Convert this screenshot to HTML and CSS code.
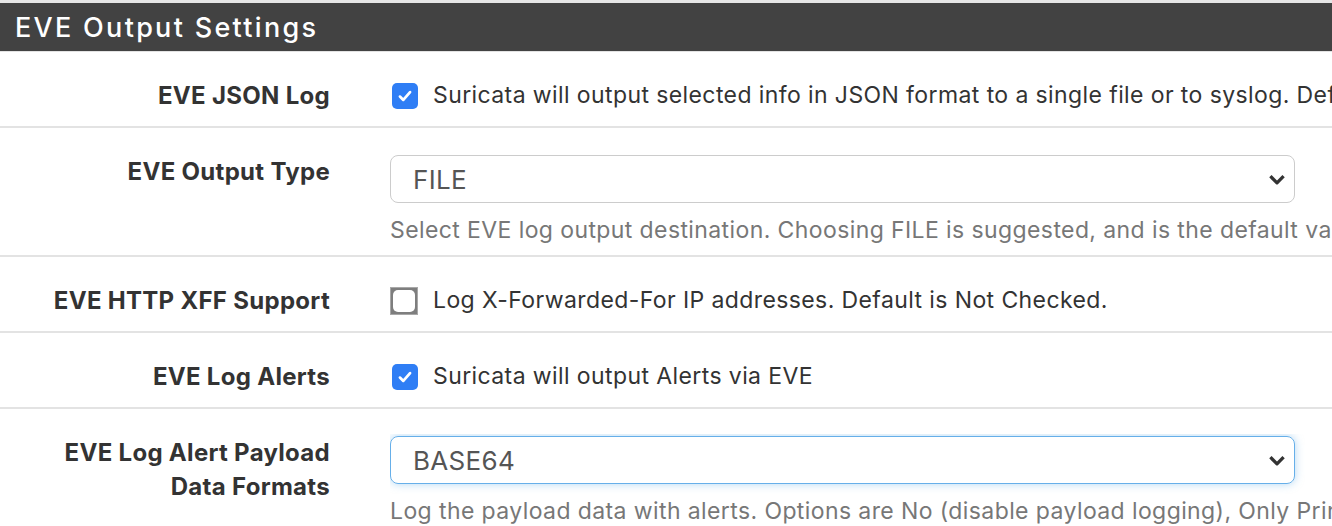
FILE: index.html
```html
<!DOCTYPE html>
<html lang="en">
<head>
    <meta charset="UTF-8">
    <meta name="viewport" content="width=device-width, initial-scale=1.0">
    <title>EVE Output Settings</title>
    <link rel="stylesheet" href="styles.css">
</head>
<body>
    <div class="panel">
        <div class="panel-heading">EVE Output Settings</div>
        <div class="panel-body">
            <div class="form-row">
                <label class="form-label">EVE JSON Log</label>
                <div class="form-control-col">
                    <label class="check">
                        <span class="box checked">
                            <svg viewBox="0 0 16 16" width="18" height="18"><path d="M3.5 8.5l3 3 6-7" fill="none" stroke="#fff" stroke-width="2.4" stroke-linecap="round" stroke-linejoin="round"/></svg>
                        </span>
                        <span class="check-text">Suricata will output selected info in JSON format to a single file or to syslog. Default is Not Checked.</span>
                    </label>
                </div>
            </div>

            <div class="form-row">
                <label class="form-label">EVE Output Type</label>
                <div class="form-control-col">
                    <div class="select">
                        <span>FILE</span>
                        <svg class="chevron" viewBox="0 0 16 10" width="18" height="11"><path d="M2 2l6 6 6-6" fill="none" stroke="#333" stroke-width="3" stroke-linejoin="round"/></svg>
                    </div>
                    <div class="help">Select EVE log output destination. Choosing FILE is suggested, and is the default value.</div>
                </div>
            </div>

            <div class="form-row">
                <label class="form-label">EVE HTTP XFF Support</label>
                <div class="form-control-col">
                    <label class="check">
                        <span class="box unchecked"><span class="inner"></span></span>
                        <span class="check-text">Log X-Forwarded-For IP addresses. Default is Not Checked.</span>
                    </label>
                </div>
            </div>

            <div class="form-row">
                <label class="form-label">EVE Log Alerts</label>
                <div class="form-control-col">
                    <label class="check">
                        <span class="box checked">
                            <svg viewBox="0 0 16 16" width="18" height="18"><path d="M3.5 8.5l3 3 6-7" fill="none" stroke="#fff" stroke-width="2.4" stroke-linecap="round" stroke-linejoin="round"/></svg>
                        </span>
                        <span class="check-text">Suricata will output Alerts via EVE</span>
                    </label>
                </div>
            </div>

            <div class="form-row">
                <label class="form-label">EVE Log Alert Payload<br>Data Formats</label>
                <div class="form-control-col">
                    <div class="select focused">
                        <span>BASE64</span>
                        <svg class="chevron" viewBox="0 0 16 10" width="18" height="11"><path d="M2 2l6 6 6-6" fill="none" stroke="#333" stroke-width="3" stroke-linejoin="round"/></svg>
                    </div>
                    <div class="help">Log the payload data with alerts. Options are No (disable payload logging), Only Printable (lossy), BASE64 encoded or both.</div>
                </div>
            </div>
        </div>
    </div>
</body>
</html>
```

FILE: styles.css
```css
body {
    margin: 0;
    background: #fff;
    font-family: Inter, "Noto Sans", sans-serif;
    color: #333;
    overflow: hidden;
}
.panel {
    border-top: 3px solid #e6e6e6;
}
.panel-heading {
    background-color: #424242;
    color: #fff;
    font-size: 27px;
    font-weight: 500;
    letter-spacing: 2.3px;
    height: 48px;
    line-height: 50px;
    padding-left: 15px;
    border-bottom: 1px solid #e3e3e3;
}
.form-row {
    display: grid;
    grid-template-columns: 330px 1fr;
    column-gap: 60px;
    padding: 25px 0 12px;
    border-bottom: 2px solid #e3e3e3;
}
.form-label {
    text-align: right;
    font-size: 24px;
    font-weight: 700;
    letter-spacing: 0.3px;
    line-height: 34px;
    padding-top: 2px;
    color: #333;
}
.form-control-col {
    min-width: 0;
    white-space: nowrap;
    overflow: hidden;
}
.check {
    display: flex;
    align-items: center;
    gap: 15px;
    font-size: 23px;
    letter-spacing: 0.4px;
    line-height: 37px;
    color: #333;
}
.box {
    flex: none;
    width: 26px;
    height: 26px;
    box-sizing: border-box;
    display: flex;
    align-items: center;
    justify-content: center;
}
.box.checked {
    background: #2f7ef5;
    border-radius: 5px;
    margin-left: 2px;
}
.box.unchecked {
    width: 28px;
    height: 28px;
    background: #7e7e7e;
    border: 1px solid #a8a8a8;
}
.box .inner {
    width: 22px;
    height: 22px;
    background: #fff;
    border-radius: 5px;
}
.select {
    width: 905px;
    height: 48px;
    margin-top: 2px;
    box-sizing: border-box;
    border: 1px solid #ccc;
    border-radius: 8px;
    display: flex;
    align-items: center;
    justify-content: space-between;
    padding: 0 8px 0 22px;
    font-size: 26px;
    letter-spacing: 0.3px;
    color: #555;
}
.select.focused {
    border-color: #66afe9;
    box-shadow: 0 0 8px rgba(102, 175, 233, 0.5);
}
.help {
    margin: 12px 0 -2px;
    font-size: 23px;
    letter-spacing: 0.4px;
    line-height: 30px;
    color: #777;
}
```
